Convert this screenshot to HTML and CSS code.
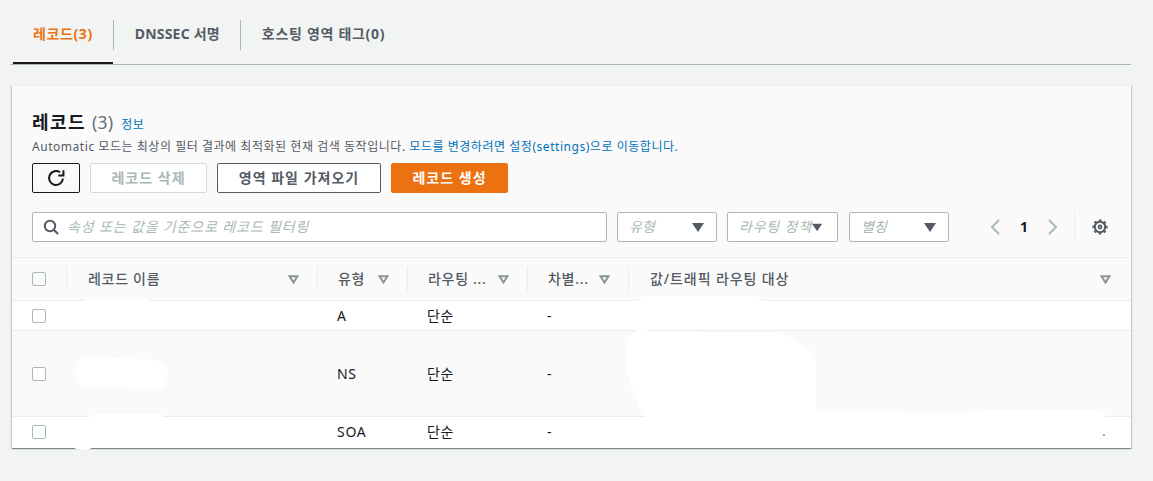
FILE: index.html
```html
<!DOCTYPE html>
<html lang="ko">
<head>
<meta charset="utf-8">
<title>레코드</title>
<link rel="stylesheet" href="styles.css">
</head>
<body>
<nav class="tabs">
  <a class="tab active">레코드(3)</a>
  <a class="tab tab-latin">DNSSEC 서명</a>
  <a class="tab tab-wide">호스팅 영역 태그(0)</a>
</nav>
<section class="card">
  <header class="card-head">
    <h2 class="title">레코드 <span class="count">(3)</span> <a class="info">정보</a></h2>
    <p class="desc">Automatic 모드는 최상의 필터 결과에 최적화된 현재 검색 동작입니다. <a class="link">모드를 변경하려면 설정(settings)으로 이동합니다.</a></p>
    <div class="actions">
      <button class="btn btn-icon" aria-label="새로 고침">
        <svg width="18" height="18" viewBox="0 0 16 16" fill="none" stroke="#16191f" stroke-width="1.8"><path d="M14.2 8.6A6.2 6.2 0 1 1 11.6 2.9"/><path d="M14.6 1.2v4.6h-4.6"/></svg>
      </button>
      <button class="btn btn-disabled w117">레코드 삭제</button>
      <button class="btn w164">영역 파일 가져오기</button>
      <button class="btn btn-primary w117">레코드 생성</button>
    </div>
  </header>
  <div class="filters">
    <div class="search">
      <svg width="16" height="16" viewBox="0 0 16 16" fill="none" stroke="#545b64" stroke-width="2"><circle cx="7" cy="7" r="5.2"/><path d="M10.8 10.8 15 15"/></svg>
      <span class="ph ph-wide">속성 또는 값을 기준으로 레코드 필터링</span>
    </div>
    <div class="select s100"><span class="ph">유형</span><svg class="caret" width="12" height="9" viewBox="0 0 12 9"><path d="M0 0h12L6 9z" fill="#545b64"/></svg></div>
    <div class="select s111 tight"><span class="ph ph-mid">라우팅 정책</span><svg class="caret" width="12" height="9" viewBox="0 0 12 9"><path d="M0 0h12L6 9z" fill="#545b64"/></svg></div>
    <div class="select s100"><span class="ph">별칭</span><svg class="caret" width="12" height="9" viewBox="0 0 12 9"><path d="M0 0h12L6 9z" fill="#545b64"/></svg></div>
    <div class="pager">
      <svg width="10" height="16" viewBox="0 0 10 16" fill="none" stroke="#aab7b8" stroke-width="2"><path d="M9 1 2 8l7 7"/></svg>
      <span class="page-num">1</span>
      <svg width="10" height="16" viewBox="0 0 10 16" fill="none" stroke="#aab7b8" stroke-width="2"><path d="m1 1 7 7-7 7"/></svg>
    </div>
    <div class="gear-box">
      <svg width="16" height="16" viewBox="0 0 16 16" fill="none" stroke="#545b64"><circle cx="8" cy="8" r="5.2" stroke-width="2"/><circle cx="8" cy="8" r="6.8" stroke-width="1.6" stroke-dasharray="2.7 2.64" stroke-dashoffset="1.35"/><circle cx="8" cy="8" r="1.6" stroke-width="1.6"/></svg>
    </div>
  </div>
  <div class="table">
    <div class="row head">
      <div class="cell check"><span class="box"></span></div>
      <div class="cell th th-wide"><span>레코드 이름</span><svg class="sort" width="11" height="9" viewBox="0 0 11 9"><path d="M1.5 1.2h8L5.5 7.5z" fill="none" stroke="#879596" stroke-width="2"/></svg></div>
      <div class="cell th"><span>유형</span><svg class="sort" width="11" height="9" viewBox="0 0 11 9"><path d="M1.5 1.2h8L5.5 7.5z" fill="none" stroke="#879596" stroke-width="2"/></svg></div>
      <div class="cell th"><span>라우팅 ...</span><svg class="sort" width="11" height="9" viewBox="0 0 11 9"><path d="M1.5 1.2h8L5.5 7.5z" fill="none" stroke="#879596" stroke-width="2"/></svg></div>
      <div class="cell th"><span>차별...</span><svg class="sort" width="11" height="9" viewBox="0 0 11 9"><path d="M1.5 1.2h8L5.5 7.5z" fill="none" stroke="#879596" stroke-width="2"/></svg></div>
      <div class="cell th th-wide th-last"><span>값/트래픽 라우팅 대상</span><svg class="sort" width="11" height="9" viewBox="0 0 11 9"><path d="M1.5 1.2h8L5.5 7.5z" fill="none" stroke="#879596" stroke-width="2"/></svg></div>
    </div>
    <div class="row r1">
      <div class="cell check"><span class="box"></span></div>
      <div class="cell"></div><div class="cell">A</div><div class="cell">단순</div><div class="cell">-</div><div class="cell"></div>
    </div>
    <div class="row r2">
      <div class="cell check"><span class="box"></span></div>
      <div class="cell"></div><div class="cell">NS</div><div class="cell">단순</div><div class="cell">-</div><div class="cell"></div>
    </div>
    <div class="row r3">
      <div class="cell check"><span class="box"></span></div>
      <div class="cell"></div><div class="cell">SOA</div><div class="cell">단순</div><div class="cell">-</div><div class="cell end"><a class="info">.</a></div>
    </div>
  </div>
</section>
<svg class="redact" width="1153" height="481" viewBox="0 0 1153 481" aria-hidden="true">
  <path fill="#fff" d="M84 301q2-2 10-2h48q6 0 8 2z"/>
  <path fill="#fff" d="M638 301q3-5 10-5h102q8 0 12 5z"/>
  <path fill="#fff" d="M646 331h52l3 2h72q12 0 22 8 q22 10 21 26v38l-1 6 150 2 q10-3 28-3h104q6 0 8 6v2H646l-5-8-14-36q-2-10-1-25 q0-14 10-18 q0-12 10-18z"/>
  <path fill="#fff" d="M75 373q0-16 16-16l50 2q27 0 27 15t-15 15q-20 0-30-2H90q-15 0-15-14z"/>
  <path fill="#fff" d="M88 417q6-3 16-3h50q8 0 10 3z"/>
  <path fill="#fff" d="M73 447h20q-3 3-10 3t-10-3z"/>
  <path fill="#fff" d="M642 447h22q-10 2-22 0z"/>
</svg>
</body>
</html>
```

FILE: styles.css
```css
* { box-sizing: border-box; }
html, body { margin: 0; padding: 0; }
body {
  position: relative;
  width: 1153px;
  height: 481px;
  overflow: hidden;
  background: #f2f3f3;
  color: #16191f;
  font: 14px/20px "Noto Sans", "Noto Sans CJK KR", sans-serif;
  padding: 0 22px 0 12px;
}
.tabs {
  display: flex;
  height: 65px;
  margin-left: -2px;
  padding-left: 3px;
  border-bottom: 1px solid #aab7b8;
  align-items: flex-start;
}
.tab {
  position: relative;
  height: 64px;
  padding: 24px 20px 0 22px;
  color: #545b64;
  font-weight: 700;
  font-size: 14px;
  letter-spacing: .6px;
  white-space: nowrap;
}
.tab + .tab::before {
  content: "";
  position: absolute;
  left: 0;
  top: 20px;
  height: 30px;
  border-left: 1px solid #aab7b8;
}
.tab.active { color: #ec7211; border-bottom: 2px solid #16191f; padding-left: 20px; }
.tab-latin { letter-spacing: .2px; }
.tab-wide { letter-spacing: .7px; }
.card {
  margin-top: 20px;
  width: 1119px;
  height: 363px;
  background: #fafafa;
  box-shadow: 0 1px 1px 0 rgba(0,28,36,.3), 1px 1px 1px 0 rgba(0,28,36,.15), -1px 1px 1px 0 rgba(0,28,36,.15);
  border-top: 1px solid #eaeded;
}
.card-head { padding: 23px 20px 0; }
.title { margin: 0; font-size: 18px; line-height: 26px; font-weight: 700; letter-spacing: 1.4px; }
.count { color: #687078; font-weight: 400; letter-spacing: 0; }
.info { color: #0073bb; font-size: 12px; font-weight: 400; margin-left: 2px; letter-spacing: .5px; }
.desc { margin: 0; font-size: 12px; line-height: 18px; color: #545b64; white-space: nowrap; letter-spacing: .54px; }
.link { color: #0073bb; }
.actions { display: flex; gap: 10px; margin-top: 7px; }
.btn {
  height: 30px;
  padding: 0;
  border: 1px solid #545b64;
  border-radius: 2px;
  background: #fff;
  color: #545b64;
  font: 700 14px/20px "Noto Sans", "Noto Sans CJK KR", sans-serif;
  letter-spacing: 1px;
  display: flex;
  align-items: center;
  justify-content: center;
}
.btn-icon { width: 48px; border-color: #16191f; background: #fafafa; }
.w117 { width: 117px; }
.w164 { width: 164px; }
.btn-disabled { border-color: #d5dbdb; color: #aab7b8; }
.btn-primary { background: #ec7211; border-color: #ec7211; color: #fff; }
.filters { display: flex; align-items: center; gap: 10px; height: 30px; margin: 19px 0 0 20px; }
.search, .select {
  height: 30px;
  background: #fff;
  border: 1px solid #aab7b8;
  border-radius: 2px;
  display: flex;
  align-items: center;
}
.search { width: 575px; gap: 8px; padding-left: 10px; }
.select { justify-content: space-between; padding: 0 12px 0 11px; }
.select.tight { padding-right: 15px; }
.s100 { width: 100px; }
.s111 { width: 111px; margin-right: 1px; }
.ph { color: #aab7b8; font-style: italic; font-size: 14px; white-space: nowrap; }
.ph-wide { letter-spacing: .85px; }
.ph-mid { letter-spacing: .8px; }
.pager { display: flex; align-items: center; margin-left: 31px; gap: 20px; width: 74px; }
.page-num { font-weight: 700; font-size: 14px; width: 8px; text-align: center; }
.gear-box { display: flex; align-items: center; width: 34px; height: 30px; padding-left: 17px; border-left: 1px solid #eaeded; }
.table { margin-top: 15px; border-top: 1px solid #eaeded; }
.row { display: grid; grid-template-columns: 54px 251px 90px 120px 101px 1fr; align-items: center; border-bottom: 1px solid #eaeded; }
.row:last-child { border-bottom: 0; }
.head { height: 43px; }
.r1 { height: 30px; background: #fff; }
.r2 { height: 86px; background: #fafafa; }
.r3 { height: 31px; background: #fff; padding-bottom: 2px; }
.cell { padding-left: 20px; color: #16191f; display: flex; align-items: center; justify-content: space-between; white-space: nowrap; letter-spacing: .7px; }
.end { justify-content: flex-end; padding-right: 25px; }
.check { justify-content: flex-start; }
.th { height: 24px; border-left: 1px solid #eaeded; color: #545b64; font-weight: 500; padding-right: 18px; letter-spacing: .7px; }
.th-wide { padding-left: 21px; }
.th-last { padding-right: 20px; letter-spacing: .9px; }
.box { width: 14px; height: 14px; border: 1px solid #aab7b8; border-radius: 2px; background: #fff; }
.head .box { background: #fafafa; }
.redact { position: absolute; left: 0; top: 0; pointer-events: none; }
```
